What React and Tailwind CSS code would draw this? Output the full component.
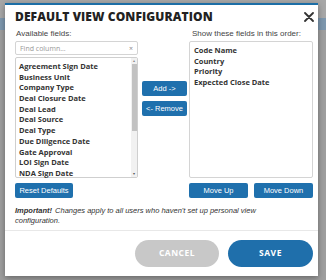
const available = [
  "Agreement Sign Date",
  "Business Unit",
  "Company Type",
  "Deal Closure Date",
  "Deal Lead",
  "Deal Source",
  "Deal Type",
  "Due Diligence Date",
  "Gate Approval",
  "LOI Sign Date",
  "NDA Sign Date",
];

const selected = ["Code Name", "Country", "Priority", "Expected Close Date"];

function SmallButton({ children, className = "" }) {
  return (
    <button
      type="button"
      className={`flex h-[15px] items-center justify-center rounded-[2px] bg-[#1f70ad] text-[7.5px] leading-none text-white ${className}`}
      style={{ fontFamily: "'Liberation Sans', Arial, sans-serif" }}
    >
      {children}
    </button>
  );
}

export default function App() {
  return (
    <div className="h-[280px] w-[326px] overflow-hidden bg-[linear-gradient(to_bottom,#a7a7a7_0,#a7a7a7_18px,#7d97ae_18px,#7d97ae_30px,#9e9e9e_30px,#9e9e9e_100%)] pl-[5px] pt-[3px]">
      <div
        className="flex h-[273px] w-[313px] flex-col border-t-2 border-[#1c6ea6] bg-white shadow-[0_2px_6px_rgba(0,0,0,0.35)]"
        style={{ fontFamily: "'Open Sans', 'Liberation Sans', sans-serif" }}
      >
        <div className="flex h-[24px] items-center justify-between pl-[10px] pr-[4px]">
          <h2 className="text-[12px] font-extrabold leading-none tracking-[0.1px] text-[#222]">
            DEFAULT VIEW CONFIGURATION
          </h2>
          <svg viewBox="0 0 10 10" className="h-[10px] w-[10px] text-[#333]" fill="none" stroke="currentColor" strokeWidth="1.8" strokeLinecap="round">
            <path d="M1 1l8 8M9 1l-8 8" />
          </svg>
        </div>

        <div className="flex pl-[10px] pr-[5px]">
          <div className="flex w-[123px] flex-col">
            <p
              className="h-[10px] pl-[1px] text-[8px] leading-[10px] text-[#444]"
              style={{ fontFamily: "'Liberation Sans', Arial, sans-serif" }}
            >
              Available fields:
            </p>
            <div className="mt-[2px] flex h-[14px] items-center justify-between rounded-[2px] border border-[#d4d4d4] px-[4px]">
              <span className="text-[7px] leading-none text-[#999]">Find column...</span>
              <span className="text-[7px] leading-none text-[#888]">×</span>
            </div>
            <div className="mt-[2px] flex h-[121px] rounded-[2px] border border-[#cfcfcf]">
              <ul className="flex-1 pl-[3px] pt-[3px]">
                {available.map((f) => (
                  <li key={f} className="h-[10.7px] text-[7.5px] font-bold leading-[10.7px] text-[#333]">
                    {f}
                  </li>
                ))}
              </ul>
              <div className="flex w-[6px] flex-col items-center bg-[#f1f1f1]">
                <span className="h-[6px] text-[4px] leading-[6px] text-[#888]">▴</span>
                <span className="h-[67px] w-[5px] bg-[#c2c2c2]" />
                <span className="flex-1" />
                <span className="h-[6px] text-[4px] leading-[6px] text-[#555]">▾</span>
              </div>
            </div>
            <SmallButton className="mt-[5px] w-[58px]">Reset Defaults</SmallButton>
          </div>

          <div className="ml-[4px] flex w-[45px] flex-col gap-[5px] pt-[52px]">
            <SmallButton>Add -&gt;</SmallButton>
            <SmallButton>&lt;- Remove</SmallButton>
          </div>

          <div className="ml-[2px] flex w-[124px] flex-col">
            <p
              className="h-[10px] pl-[3px] text-[8px] leading-[10px] text-[#444]"
              style={{ fontFamily: "'Liberation Sans', Arial, sans-serif" }}
            >
              Show these fields in this order:
            </p>
            <div className="mt-[2px] h-[137px] rounded-[2px] border border-[#d4d4d4]">
              <ul className="pl-[4px] pt-[3px]">
                {selected.map((f) => (
                  <li key={f} className="h-[10.7px] text-[7.5px] font-bold leading-[10.7px] text-[#333]">
                    {f}
                  </li>
                ))}
              </ul>
            </div>
            <div className="mt-[5px] flex justify-between">
              <SmallButton className="w-[59px]">Move Up</SmallButton>
              <SmallButton className="w-[59px]">Move Down</SmallButton>
            </div>
          </div>
        </div>

        <p
          className="mt-[8px] w-[262px] pl-[10px] text-[7.5px] italic leading-[10px] text-[#333]"
          style={{ fontFamily: "'Liberation Sans', Arial, sans-serif" }}
        >
          <b className="mr-[3px] inline-block">Important!</b>Changes apply to all users who haven't set up personal view configuration.
        </p>

        <div className="mt-[4px] h-px bg-[#e8e8e8]" />

        <div className="mt-[9px] flex justify-end gap-[9px] pr-[5px]">
          <button
            type="button"
            className="h-[27px] w-[84px] rounded-full bg-[#c8c8c8] text-[8.5px] font-bold tracking-[0.5px] text-white"
          >
            CANCEL
          </button>
          <button
            type="button"
            className="h-[27px] w-[85px] rounded-full bg-[#1f6fab] text-[8.5px] font-bold tracking-[0.5px] text-white"
          >
            SAVE
          </button>
        </div>
      </div>
    </div>
  );
}
